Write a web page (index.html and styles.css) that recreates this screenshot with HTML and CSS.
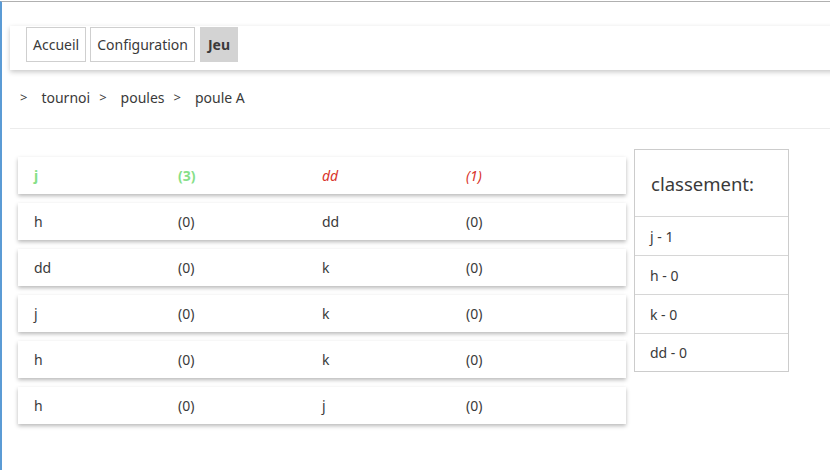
FILE: index.html
```html
<!DOCTYPE html>
<html lang="fr">
<head>
<meta charset="utf-8">
<title>Jeu</title>
<link rel="stylesheet" href="styles.css">
</head>
<body>
<div class="frame">
  <nav class="nav">
    <a class="nav-btn">Accueil</a>
    <a class="nav-btn">Configuration</a>
    <a class="nav-btn active">Jeu</a>
  </nav>
  <div class="crumbs">
    <span class="sep">&gt;</span><span>tournoi</span>
    <span class="sep">&gt;</span><span>poules</span>
    <span class="sep">&gt;</span><span>poule A</span>
  </div>
  <hr class="rule">
  <div class="main">
    <div class="matches">
      <div class="match"><span class="win">j</span><span class="win">(3)</span><span class="lose">dd</span><span class="lose">(1)</span></div>
      <div class="match"><span>h</span><span>(0)</span><span>dd</span><span>(0)</span></div>
      <div class="match"><span>dd</span><span>(0)</span><span>k</span><span>(0)</span></div>
      <div class="match"><span>j</span><span>(0)</span><span>k</span><span>(0)</span></div>
      <div class="match"><span>h</span><span>(0)</span><span>k</span><span>(0)</span></div>
      <div class="match"><span>h</span><span>(0)</span><span>j</span><span>(0)</span></div>
    </div>
    <div class="ranking">
      <div class="ranking-title">classement:</div>
      <div class="ranking-row">j - 1</div>
      <div class="ranking-row">h - 0</div>
      <div class="ranking-row">k - 0</div>
      <div class="ranking-row">dd - 0</div>
    </div>
  </div>
</div>
</body>
</html>
```

FILE: styles.css
```css
html, body {
  margin: 0;
  padding: 0;
  background: #fff;
}
body {
  font-family: "Noto Sans", "Open Sans", sans-serif;
  font-size: 14px;
  color: #3a3a3a;
  overflow: hidden;
}
.frame {
  min-height: 470px;
  box-sizing: border-box;
  border-left: 2px solid #5b9bd5;
  border-top: 1px solid #b0b0b0;
  margin-top: 1px;
  overflow: hidden;
}
.nav {
  display: flex;
  gap: 4px;
  margin: 24px -10px 0 8px;
  padding: 1px 0 8px 16px;
  background: #fff;
  box-shadow: 0 2px 5px rgba(0,0,0,0.22);
}
.nav-btn {
  display: flex;
  align-items: center;
  height: 35px;
  box-sizing: border-box;
  padding: 0 6px;
  border: 1px solid #cfcfcf;
  color: #3a3a3a;
}
.nav-btn.active {
  border-color: #d3d3d3;
  background: #d3d3d3;
  font-weight: bold;
  padding: 0 7px;
  margin-left: 1px;
}
.crumbs {
  display: flex;
  align-items: center;
  height: 20px;
  margin: 17px 0 0 18px;
}
.crumbs .sep {
  margin: 0 14px 0 0;
  font-size: 13px;
}
.crumbs span + .sep {
  margin-left: 9px;
}
.rule {
  margin: 21px 0 0 8px;
  border: 0;
  border-top: 1px solid #ececec;
}
.main {
  display: flex;
  align-items: flex-start;
  margin: 20px 0 0 16px;
  gap: 8px;
}
.matches {
  display: flex;
  flex-direction: column;
  gap: 9px;
  margin-top: 8px;
  width: 608px;
}
.match {
  display: grid;
  grid-template-columns: 144px 144px 144px 144px;
  align-items: center;
  height: 37px;
  padding-left: 16px;
  background: #fff;
  box-shadow: 0 2px 4px rgba(0,0,0,0.28);
}
.win {
  color: #86df88;
  font-weight: bold;
}
.lose {
  color: #d9342b;
  font-style: italic;
}
.ranking {
  width: 155px;
  box-sizing: border-box;
  border: 1px solid #cccccc;
}
.ranking-title {
  height: 66px;
  display: flex;
  align-items: center;
  padding-left: 16px;
  font-size: 18.5px;
  border-bottom: 1px solid #d6d6d6;
}
.ranking-row {
  height: 38px;
  display: flex;
  align-items: center;
  padding-left: 15px;
  border-bottom: 1px solid #d6d6d6;
}
.ranking-row:last-child {
  border-bottom: 0;
  height: 37px;
}
```
